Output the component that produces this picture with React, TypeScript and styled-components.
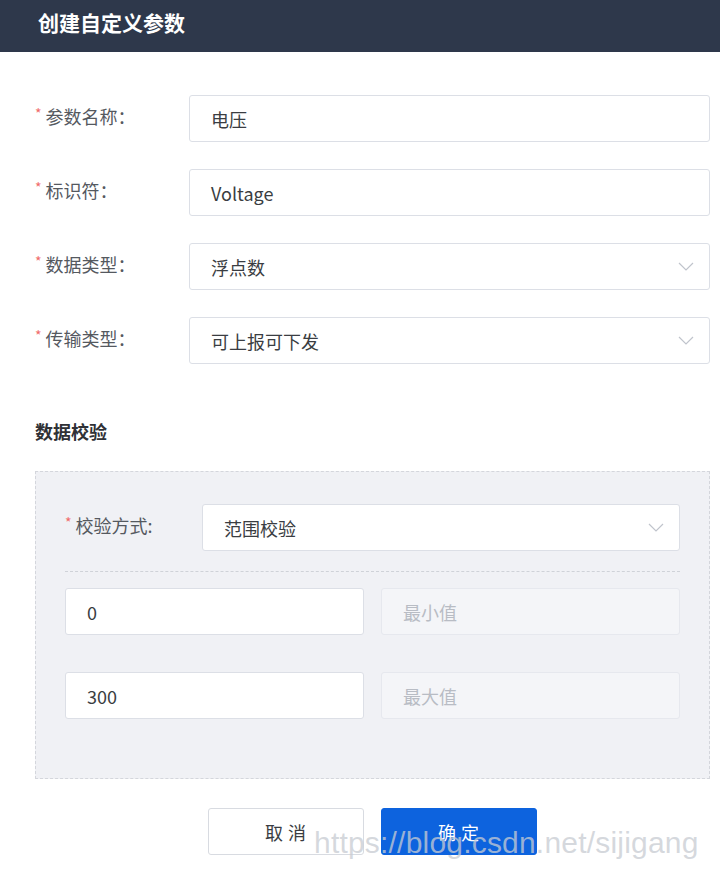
import React from 'react';
import styled, { createGlobalStyle } from 'styled-components';

const GlobalStyle = createGlobalStyle`
  body {
    margin: 0;
    background: #ffffff;
    font-family: "Noto Sans CJK SC", "Noto Sans", sans-serif;
  }
`;

const Page = styled.div`
  position: relative;
  width: 720px;
  height: 879px;
  overflow: hidden;
  background: #fff;
`;

const Header = styled.div`
  height: 52px;
  background: #2e384b;
  display: flex;
  align-items: center;
  padding-left: 38px;
  padding-bottom: 8px;
  box-sizing: border-box;
  color: #fff;
  font-size: 21px;
  font-weight: 700;
`;

const Body = styled.div`
  padding: 43px 10px 0 35px;
`;

const Form = styled.div`
  display: flex;
  flex-direction: column;
  gap: 27px;
`;

const Row = styled.div<{ labelWidth: number }>`
  display: grid;
  grid-template-columns: ${p => p.labelWidth}px 1fr;
  align-items: center;
`;

const Label = styled.div`
  font-size: 18px;
  color: #55595f;
  margin-top: -6px;
  display: flex;
  align-items: center;
  &::before {
    content: '*';
    color: #f06b6b;
    font-size: 14px;
    margin-right: 4px;
    margin-top: -5px;
  }
`;

const Field = styled.div<{ disabled?: boolean }>`
  height: 47px;
  box-sizing: border-box;
  border: 1px solid ${p => (p.disabled ? '#e6e8ee' : '#dcdfe6')};
  border-radius: 3px;
  background: ${p => (p.disabled ? '#f4f5f8' : '#fff')};
  display: flex;
  align-items: center;
  justify-content: space-between;
  padding: 0 15px 0 21px;
  font-size: 18px;
  color: ${p => (p.disabled ? '#b8bcc4' : '#3a3d42')};
  font-family: "Noto Sans CJK SC", "Noto Sans", sans-serif;
`;

const Chevron = () => (
  <svg width="16" height="9" viewBox="0 0 16 9" fill="none">
    <path d="M1 1l7 7 7-7" stroke="#c0c4cc" strokeWidth="1.2" />
  </svg>
);

const SectionTitle = styled.div`
  margin-top: 56px;
  font-size: 18px;
  font-weight: 700;
  color: #2f3136;
  line-height: 22px;
`;

const Panel = styled.div`
  margin-top: 29px;
  background: #f0f1f5;
  border: 1px dashed #d4d6dc;
  padding: 32px 29px 59px 29px;
`;

const Divider = styled.div`
  border-top: 1px dashed #cfd2d8;
  margin: 20px 0 16px;
`;

const PairGrid = styled.div`
  display: grid;
  grid-template-columns: 1fr 1fr;
  column-gap: 17px;
  row-gap: 37px;
`;

const Actions = styled.div`
  display: flex;
  justify-content: center;
  gap: 17px;
  margin-top: 29px;
`;

const Button = styled.button<{ primary?: boolean }>`
  width: 156px;
  height: 47px;
  border-radius: 3px;
  border: 1px solid ${p => (p.primary ? '#0d63de' : '#d8dbe1')};
  background: ${p => (p.primary ? '#0d63de' : '#fff')};
  color: ${p => (p.primary ? '#fff' : '#3a3d42')};
  font-size: 18px;
  letter-spacing: 5px;
  padding-left: 10px;
  font-family: "Noto Sans CJK SC", "Noto Sans", sans-serif;
`;

const Watermark = styled.div`
  position: absolute;
  left: 314px;
  top: 826px;
  font-family: "Liberation Sans", Arial, sans-serif;
  font-size: 30px;
  color: rgba(200, 204, 210, 0.75);
  pointer-events: none;
  letter-spacing: 0.2px;
`;

const fields = [
  { label: '参数名称：', value: '电压', select: false },
  { label: '标识符：', value: 'Voltage', select: false },
  { label: '数据类型：', value: '浮点数', select: true },
  { label: '传输类型：', value: '可上报可下发', select: true },
];

export default function App() {
  return (
    <Page>
      <GlobalStyle />
      <Header>创建自定义参数</Header>
      <Body>
        <Form>
          {fields.map(f => (
            <Row key={f.label} labelWidth={154}>
              <Label>{f.label}</Label>
              <Field>
                <span>{f.value}</span>
                {f.select && <Chevron />}
              </Field>
            </Row>
          ))}
        </Form>
        <SectionTitle>数据校验</SectionTitle>
        <Panel>
          <Row labelWidth={137}>
            <Label>校验方式:</Label>
            <Field>
              <span>范围校验</span>
              <Chevron />
            </Field>
          </Row>
          <Divider />
          <PairGrid>
            <Field>0</Field>
            <Field disabled>最小值</Field>
            <Field>300</Field>
            <Field disabled>最大值</Field>
          </PairGrid>
        </Panel>
        <Actions>
          <Button>取消</Button>
          <Button primary>确定</Button>
        </Actions>
      </Body>
      <Watermark>https://blog.csdn.net/sijigang</Watermark>
    </Page>
  );
}
